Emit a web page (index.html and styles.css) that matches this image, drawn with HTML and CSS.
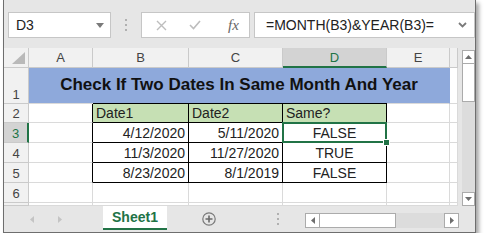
FILE: index.html
```html
<!DOCTYPE html>
<html lang="en">
<head>
  <meta charset="UTF-8">
  <title>Check If Two Dates In Same Month And Year</title>
  <link rel="stylesheet" href="styles.css">
</head>
<body>

  <div class="window">

    <!-- name box + formula bar -->
    <div class="formula-row">
      <div class="name-box">
        <span>D3</span>
        <svg width="8" height="5" viewBox="0 0 8 5"><path d="M0 0h8L4 5z" fill="#7a7a7a"/></svg>
      </div>
      <div class="grip">
        <svg width="3" height="12" viewBox="0 0 3 12"><rect x="0" y="0" width="2" height="2" fill="#b0b0b0"/><rect x="0" y="5" width="2" height="2" fill="#b0b0b0"/><rect x="0" y="10" width="2" height="2" fill="#b0b0b0"/></svg>
      </div>
      <div class="fx-box">
        <svg class="fx-cancel" width="11" height="11" viewBox="0 0 11 11"><path d="M1 1l9 9M10 1l-9 9" stroke="#bdbdbd" stroke-width="1.4" fill="none"/></svg>
        <svg class="fx-enter" width="12" height="10" viewBox="0 0 12 10"><path d="M1 5l3.5 3.5L11 1" stroke="#bdbdbd" stroke-width="1.6" fill="none"/></svg>
        <span class="fx">fx</span>
      </div>
      <div class="formula-box">
        <span>=MONTH(B3)&amp;YEAR(B3)=</span>
        <svg width="9" height="6" viewBox="0 0 9 6"><path d="M1 1l3.5 3.5L8 1" stroke="#7a7a7a" stroke-width="1.8" fill="none"/></svg>
      </div>
    </div>

    <!-- cells -->
    <div class="sheet">
      <div class="grid">
        <div class="c hd corner"><svg width="13" height="12" viewBox="0 0 13 12"><path d="M13 0v12H0z" fill="#b9b9b9"/></svg></div>
        <div class="c hd">A</div>
        <div class="c hd">B</div>
        <div class="c hd">C</div>
        <div class="c hd active-col">D</div>
        <div class="c hd">E</div>
        <div class="c hd"></div>

        <div class="c rh">1</div>
        <div class="c title">Check If Two Dates In Same Month And Year</div>
        <div class="c"></div>

        <div class="c rh">2</div>
        <div class="c tl"></div>
        <div class="c t th top">Date1</div>
        <div class="c t th top">Date2</div>
        <div class="c t th top">Same?</div>
        <div class="c"></div>
        <div class="c"></div>

        <div class="c rh active-row">3</div>
        <div class="c tl"></div>
        <div class="c t num">4/12/2020</div>
        <div class="c t num">5/11/2020</div>
        <div class="c t bool sel">FALSE</div>
        <div class="c"></div>
        <div class="c"></div>

        <div class="c rh">4</div>
        <div class="c tl"></div>
        <div class="c t num">11/3/2020</div>
        <div class="c t num">11/27/2020</div>
        <div class="c t bool">TRUE</div>
        <div class="c"></div>
        <div class="c"></div>

        <div class="c rh">5</div>
        <div class="c tl"></div>
        <div class="c t num">8/23/2020</div>
        <div class="c t num">8/1/2019</div>
        <div class="c t bool">FALSE</div>
        <div class="c"></div>
        <div class="c"></div>

        <div class="c rh">6</div>
        <div class="c"></div>
        <div class="c"></div>
        <div class="c"></div>
        <div class="c"></div>
        <div class="c"></div>
        <div class="c"></div>

        <div class="c rh"></div>
        <div class="c"></div>
        <div class="c"></div>
        <div class="c"></div>
        <div class="c"></div>
        <div class="c"></div>
        <div class="c"></div>
      </div>

      <div class="gap"></div>

      <div class="vscroll">
        <div class="sbtn"><svg width="7" height="4" viewBox="0 0 7 4"><path d="M0 4h7L3.5 0z" fill="#6e6e6e"/></svg></div>
        <div class="vthumb"></div>
        <div class="vtrack"></div>
        <div class="sbtn"><svg width="7" height="4" viewBox="0 0 7 4"><path d="M0 0h7L3.5 4z" fill="#6e6e6e"/></svg></div>
      </div>
    </div>

    <!-- sheet tabs + horizontal scroll -->
    <div class="tab-bar">
      <div class="nav">
        <svg width="4" height="7" viewBox="0 0 4 7"><path d="M4 0v7L0 3.5z" fill="#c4c4c4"/></svg>
        <svg width="4" height="7" viewBox="0 0 4 7"><path d="M0 0v7L4 3.5z" fill="#c4c4c4"/></svg>
      </div>
      <div class="tab">Sheet1</div>
      <div class="add">
        <svg width="14" height="14" viewBox="0 0 14 14"><circle cx="7" cy="7" r="6.2" stroke="#7a7a7a" stroke-width="1.2" fill="none"/><path d="M7 3.5v7M3.5 7h7" stroke="#6a6a6a" stroke-width="1.6"/></svg>
      </div>
      <div class="grip tab-grip">
        <svg width="3" height="12" viewBox="0 0 3 12"><rect x="0" y="0" width="2" height="2" fill="#b0b0b0"/><rect x="0" y="5" width="2" height="2" fill="#b0b0b0"/><rect x="0" y="10" width="2" height="2" fill="#b0b0b0"/></svg>
      </div>
      <div class="hscroll">
        <div class="sbtn"><svg width="4" height="7" viewBox="0 0 4 7"><path d="M4 0v7L0 3.5z" fill="#6e6e6e"/></svg></div>
        <div class="hthumb"></div>
        <div class="htrack"></div>
        <div class="sbtn"><svg width="4" height="7" viewBox="0 0 4 7"><path d="M0 0v7L4 3.5z" fill="#6e6e6e"/></svg></div>
      </div>
    </div>

  </div>

</body>
</html>
```

FILE: styles.css
```css
body {
margin: 0;
padding: 0 0 0 3px;
background-color: #fff;
font-family: "Liberation Sans", Arial, sans-serif;
color: #222;
}

.window {
width: 473px;
height: 233px;
box-sizing: border-box;
border: 1px solid #6e6e6e;
border-top: none;
background-color: #e6e6e6;
box-shadow: 3px 3px 4px rgba(0, 0, 0, 0.35);
display: flex;
flex-direction: column;
}

/* formula bar */
.formula-row {
height: 48px;
box-sizing: border-box;
padding: 12px 0 0 4px;
display: flex;
align-items: flex-start;
}

.name-box,
.fx-box,
.formula-box {
height: 26px;
box-sizing: border-box;
border: 1px solid #c6c6c6;
background-color: #fff;
display: flex;
align-items: center;
}

.name-box {
width: 103px;
padding: 0 6px 0 7px;
justify-content: space-between;
font-size: 14px;
}

.grip {
width: 30px;
height: 26px;
display: flex;
align-items: center;
justify-content: center;
}

.fx-box {
width: 109px;
padding-left: 14px;
}

.fx-enter {
margin-left: 22px;
}

.fx {
margin-left: 27px;
font-family: "Liberation Serif", serif;
font-style: italic;
font-size: 15px;
color: #666;
}

.formula-box {
flex: 1;
margin-left: 4px;
padding: 0 7px 0 11px;
justify-content: space-between;
font-size: 14px;
}

/* sheet */
.sheet {
height: 158px;
display: flex;
}

.grid {
display: grid;
grid-template-columns: 25px 64px 96px 94px 104px 63px 8px;
grid-template-rows: 20px 36px 19px 20px 20px 20px 20px 3px;
background-color: #fff;
}

.c {
box-sizing: border-box;
border-right: 1px solid #dadada;
border-bottom: 1px solid #dadada;
padding: 0 3px 1px;
display: flex;
align-items: flex-end;
font-size: 14px;
white-space: nowrap;
overflow: hidden;
}

.hd {
background-color: #f1f1f1;
border-color: #cacaca;
justify-content: center;
align-items: center;
padding: 0;
font-size: 13px;
color: #444;
}

.corner {
justify-content: flex-end;
align-items: flex-end;
padding: 0 3px 3px 0;
}

.rh {
background-color: #f1f1f1;
border-color: #cacaca;
justify-content: center;
padding: 0 0 1px;
font-size: 13px;
color: #444;
}

.active-col {
background-color: #d3d3d3;
border-bottom: 2px solid #217346;
color: #217346;
}

.active-row {
background-color: #d3d3d3;
border-right: 2px solid #217346;
color: #217346;
}

.title {
grid-column: span 5;
background-color: #8ea9db;
border-right-color: #8ea9db;
justify-content: center;
padding-bottom: 8px;
font-size: 17px;
font-weight: bold;
color: #111;
}

.tl {
border-right-color: #000;
}

.t {
border-right-color: #000;
border-bottom-color: #000;
}

.top {
box-shadow: 0 -1px 0 #000;
}

.th {
background-color: #c6e0b4;
}

.num {
justify-content: flex-end;
}

.bool {
justify-content: center;
}

.sel {
position: relative;
overflow: visible;
}

.sel::after {
content: "";
position: absolute;
left: -1px;
top: -1px;
right: -1px;
bottom: -1px;
border: 2px solid #217346;
}

.sel::before {
content: "";
position: absolute;
right: -4px;
bottom: -4px;
width: 5px;
height: 5px;
background-color: #217346;
border: 1px solid #fff;
z-index: 1;
}

.gap {
width: 4px;
}

.vscroll {
width: 13px;
padding-top: 2px;
display: flex;
flex-direction: column;
}

.sbtn {
box-sizing: border-box;
border: 1px solid #ababab;
background-color: #fff;
display: flex;
align-items: center;
justify-content: center;
}

.vscroll .sbtn {
height: 14px;
}

.vthumb {
height: 38px;
box-sizing: border-box;
border: 1px solid #ababab;
border-top: none;
background-color: #fff;
}

.vtrack {
flex: 1;
background-color: #dcdcdc;
}

/* tabs */
.tab-bar {
height: 26px;
display: flex;
}

.nav {
width: 99px;
display: flex;
align-items: center;
padding-left: 26px;
gap: 24px;
box-sizing: border-box;
}

.tab {
width: 64px;
box-sizing: border-box;
background-color: #fff;
border-bottom: 2px solid #217346;
margin-bottom: 2px;
display: flex;
align-items: center;
justify-content: center;
font-size: 14px;
font-weight: bold;
color: #217346;
}

.add {
width: 84px;
display: flex;
align-items: center;
justify-content: center;
}

.tab-grip {
width: 54px;
height: auto;
}

.hscroll {
width: 154px;
height: 15px;
margin-top: 7px;
display: flex;
}

.hscroll .sbtn {
width: 15px;
}

.hthumb {
width: 76px;
box-sizing: border-box;
border: 1px solid #ababab;
border-left: none;
background-color: #fff;
}

.htrack {
flex: 1;
background-color: #dcdcdc;
}
```
